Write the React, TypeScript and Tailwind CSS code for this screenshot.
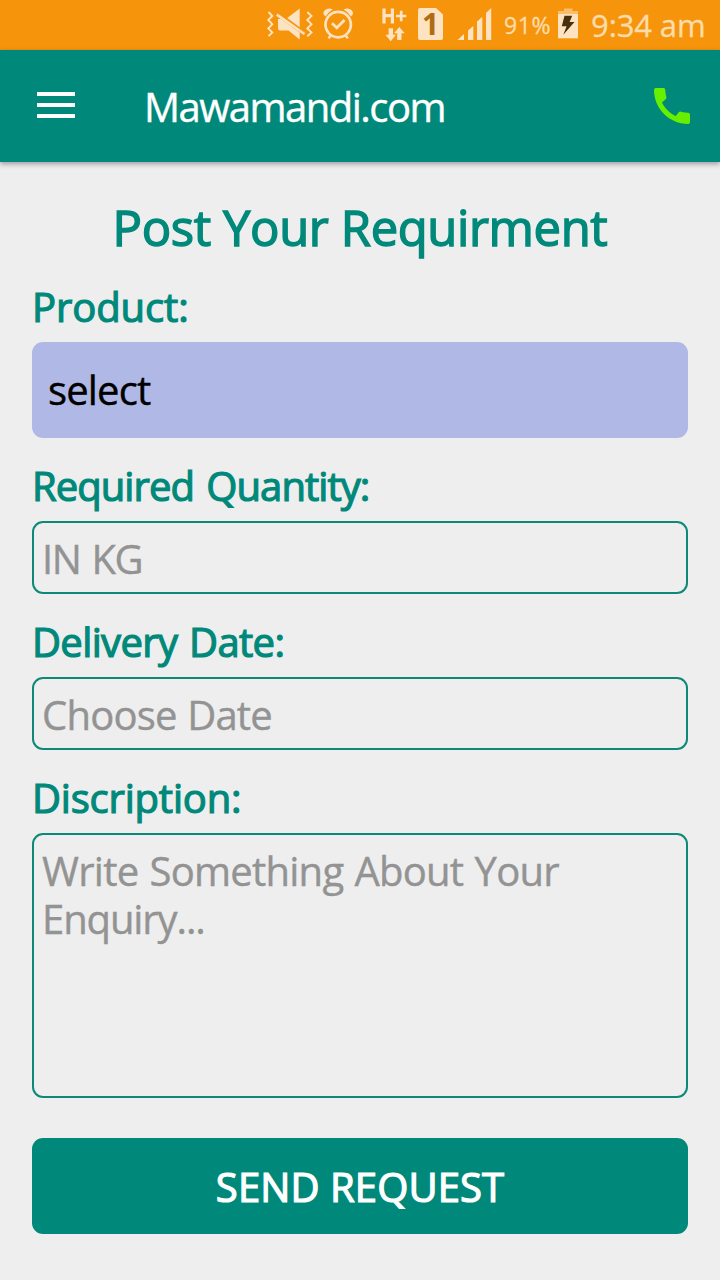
import type { ReactNode } from "react";

function StatusBar() {
  return (
    <div className="flex h-[50px] items-center bg-[#f6940c] pl-[266px] text-[#fde3c1]">
      <svg className="h-[50px] w-[48px] shrink-0" viewBox="266 0 48 50" fill="none">
        <g stroke="currentColor" strokeWidth="1.9">
          <path d="M268.5 12 L272.3 16 L268.3 20 L272.3 24.2 L268.3 28.4 L272.3 32.4 L268.5 36.2" />
          <path d="M307.3 12 L311.5 16 L307.3 20 L311.5 24.2 L307.3 28.4 L311.5 32.4 L307.3 36.2" />
        </g>
        <path fill="currentColor" d="M299.7 8.5 V27.2 L287.2 18 Z M278 19 H281 L299.7 32.5 V39.5 L288.5 30.5 H280 Q278 30.5 278 28.5 Z" />
        <path stroke="currentColor" strokeWidth="2.6" d="M276.8 14.6 L304.5 34" />
      </svg>
      <svg className="ml-[8px] h-[50px] w-[34px] shrink-0" viewBox="322 0 34 50" fill="none">
        <circle cx="338.2" cy="24.6" r="12.7" stroke="currentColor" strokeWidth="2.7" />
        <path stroke="currentColor" strokeWidth="2.8" d="M332 23.2 L336.8 27.8 L344.6 20" />
        <path fill="currentColor" d="M325.6 16.6 Q321.8 13.6 324.6 10.6 Q328.2 6.8 332.8 9.6 Q328 12 325.6 16.6 Z M350.8 16.6 Q354.6 13.6 351.8 10.6 Q348.2 6.8 343.6 9.6 Q348.4 12 350.8 16.6 Z" />
        <path stroke="currentColor" strokeWidth="2.4" d="M331 35 L328.6 38.4 M345.4 35 L347.8 38.4" />
      </svg>
      <svg className="ml-[26px] h-[50px] w-[26px] shrink-0" viewBox="382 0 26 50" fill="none">
        <path stroke="currentColor" strokeWidth="3.2" d="M384 8.5 V23.5 M392.4 8.5 V23.5 M384 15.7 H392.4" />
        <path stroke="currentColor" strokeWidth="2.7" d="M396 16 H406.3 M401.2 10.8 V21.2" />
        <path fill="currentColor" d="M388.6 28.3 H393 V34.8 H396 L390.8 41.3 L385.4 34.8 H388.6 Z M397.2 40 V33.3 H394 L399.3 27 L404.7 33.3 H401.5 V40 Z" />
      </svg>
      <div className="relative ml-[10px] h-[50px] w-[25px] shrink-0">
        <svg className="h-[50px] w-[25px]" viewBox="418 0 25 50">
          <path fill="currentColor" d="M420 8 H436 L443 14.5 V38 Q443 40 441 40 H420 Q418 40 418 38 V10 Q418 8 420 8 Z" />
        </svg>
        <span className="absolute inset-x-0 top-[9px] text-center text-[30px] leading-[30px] font-bold text-[#b06c12]">1</span>
      </div>
      <svg className="ml-[14px] h-[50px] w-[36px] shrink-0" viewBox="457 0 36 50" fill="currentColor">
        <path d="M457.5 40 L464 34 V40 Z M468 30.5 L473.3 26 V40 H468 Z M477 21.5 L482.3 17 V40 H477 Z M486 13 L491.2 8 V40 H486 Z" />
      </svg>
      <span className="ml-[11px] w-[53px] shrink-0 text-[23px] leading-[50px] tracking-[0.6px] whitespace-nowrap text-[#fddcab] [-webkit-text-stroke:0.3px]">91%</span>
      <svg className="ml-[1px] h-[50px] w-[20px] shrink-0" viewBox="558 0 20 50">
        <path fill="#fbbd68" d="M564 8.5 H572.5 V11 H578 V14.5 H558 V11 H564 Z" />
        <path fill="currentColor" d="M558 14 H578 V38.3 H558 Z" />
        <path fill="#4a2f0c" d="M564.5 15.8 H572.2 L569.6 22 H574.5 L563.3 34.8 L566.6 26.2 H561.8 Z" />
      </svg>
      <span className="mt-[-1px] ml-[13px] text-[31px] leading-[50px] tracking-[-0.1px] whitespace-nowrap text-[#fddcab] [-webkit-text-stroke:0.3px]">9:34 am</span>
    </div>
  );
}

function AppBar() {
  return (
    <header className="flex h-[112px] items-center bg-[#00897a] pr-[24px] pl-[37px] shadow-[0_2px_5px_rgba(0,0,0,0.35)]">
      <div className="flex w-[38px] flex-col gap-[7px] pb-0.5">
        <div className="h-1 bg-white" />
        <div className="h-1 bg-white" />
        <div className="h-1 bg-white" />
      </div>
      <h1 className="ml-[69px] pt-0.5 text-[40px] leading-[48px] tracking-[-1.5px] text-white [-webkit-text-stroke:0.4px]">Mawamandi.com</h1>
      <svg className="ml-auto size-[48px]" viewBox="0 0 24 24" fill="#66f000">
        <path d="M20.01 15.38c-1.23 0-2.42-.2-3.53-.56-.35-.12-.74-.03-1.01.24l-1.57 1.97c-2.83-1.35-5.48-3.9-6.89-6.83l1.95-1.66c.27-.28.35-.67.24-1.02-.37-1.11-.56-2.3-.56-3.53 0-.54-.45-.99-.99-.99H4.19C3.65 3 3 3.24 3 3.99 3 13.28 10.73 21 20.01 21c.71 0 .99-.63.99-1.18v-3.45c0-.54-.45-.99-.99-.99z" />
      </svg>
    </header>
  );
}

function Label({ className, children }: { className: string; children: ReactNode }) {
  return <div className={`text-[40px] leading-[48px] text-[#00897a] [-webkit-text-stroke:1.2px] ${className}`}>{children}</div>;
}

function Field({ className, children }: { className: string; children: ReactNode }) {
  return (
    <div className={`mt-[11px] rounded-[11px] border-2 border-[#0f8878] px-2 text-[40px] leading-[48px] text-[#939393] [-webkit-text-stroke:0.4px] ${className}`}>
      {children}
    </div>
  );
}

export default function App() {
  return (
    <div className="flex h-[1280px] w-[720px] flex-col overflow-hidden bg-[#eeeeee] font-['Open_Sans','Noto_Sans',sans-serif]">
      <StatusBar />
      <AppBar />
      <main className="flex flex-col px-8 pt-[35px]">
        <h2 className="text-center text-[49px] leading-[60px] tracking-[-0.4px] text-[#00897a] [-webkit-text-stroke:1.4px]">Post Your Requirment</h2>
        <Label className="mt-[26px] tracking-[-0.1px]">Product:</Label>
        <div className="mt-[11px] flex h-24 items-center rounded-[11px] bg-[#b0b8e6] px-4 text-[40px] leading-[48px] tracking-[-0.85px] text-black [-webkit-text-stroke:0.4px]">select</div>
        <Label className="mt-6 tracking-[-0.95px] [word-spacing:3px]">Required Quantity:</Label>
        <Field className="flex h-[73px] items-center pt-0.5 tracking-[-1.4px] [word-spacing:2px]">IN KG</Field>
        <Label className="mt-6 tracking-[-0.65px] [word-spacing:2px]">Delivery Date:</Label>
        <Field className="flex h-[73px] items-center pt-0.5 tracking-[-0.8px] [word-spacing:1px]">Choose Date</Field>
        <Label className="mt-6 tracking-[-0.2px]">Discription:</Label>
        <Field className="h-[265px] pt-3">
          <div className="tracking-[-0.75px] whitespace-nowrap [word-spacing:1.5px]">Write Something About Your</div>
          <div className="tracking-[-1.1px]">Enquiry...</div>
        </Field>
        <button className="mt-10 h-24 rounded-[11px] bg-[#00897a] pt-0.5 text-[40px] leading-[48px] tracking-[0.1px] text-white [-webkit-text-stroke:1.2px]">SEND REQUEST</button>
      </main>
    </div>
  );
}
